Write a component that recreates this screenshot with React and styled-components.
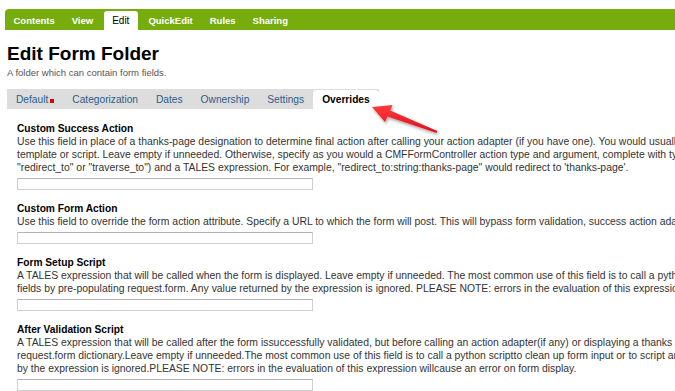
import React from 'react'
import styled, { createGlobalStyle } from 'styled-components'

const GlobalStyle = createGlobalStyle`
  html, body {
    margin: 0;
    padding: 0;
    background: #fff;
    overflow: hidden;
  }
  body {
    font-family: "Liberation Sans", Arial, sans-serif;
  }
`

const actions = ['Contents', 'View', 'Edit', 'QuickEdit', 'Rules', 'Sharing']
const tabs = ['Default', 'Categorization', 'Dates', 'Ownership', 'Settings', 'Overrides']

// help text is laid out as fixed lines, the right side is clipped by the window
const fields = [
  {
    label: 'Custom Success Action',
    lines: [
      'Use this field in place of a thanks-page designation to determine final action after calling your action adapter (if you have one). You would usually use this for a custom success',
      'template or script. Leave empty if unneeded. Otherwise, specify as you would a CMFFormController action type and argument, complete with type of action to execute (e.g.,',
      '"redirect_to" or "traverse_to") and a TALES expression. For example, "redirect_to:string:thanks-page" would redirect to \'thanks-page\'.',
    ],
  },
  {
    label: 'Custom Form Action',
    lines: [
      'Use this field to override the form action attribute. Specify a URL to which the form will post. This will bypass form validation, success action adapter and thanks page.',
    ],
  },
  {
    label: 'Form Setup Script',
    lines: [
      'A TALES expression that will be called when the form is displayed. Leave empty if unneeded. The most common use of this field is to call a python script that sets defaults for multiple',
      'fields by pre-populating request.form. Any value returned by the expression is ignored. PLEASE NOTE: errors in the evaluation of this expression will cause an error on form display.',
    ],
  },
  {
    label: 'After Validation Script',
    lines: [
      'A TALES expression that will be called after the form issuccessfully validated, but before calling an action adapter(if any) or displaying a thanks page. Form input will be in the',
      'request.form dictionary.Leave empty if unneeded.The most common use of this field is to call a python scriptto clean up form input or to script an alternative action. Any value returned',
      'by the expression is ignored.PLEASE NOTE: errors in the evaluation of this expression willcause an error on form display.',
    ],
  },
]

export default function App() {
  return (
    <>
      <GlobalStyle />
      <Page>
        <ActionBar>
          {actions.map((a) => (
            <ActionTab key={a} $active={a === 'Edit'}>{a}</ActionTab>
          ))}
        </ActionBar>

        <Title>Edit Form Folder</Title>
        <Description>A folder which can contain form fields.</Description>

        <SubTabs>
          {tabs.map((t) => (
            <SubTab key={t} $active={t === 'Overrides'}>
              {t}
              {t === 'Default' && <Required />}
            </SubTab>
          ))}
        </SubTabs>

        <Content>
          {fields.map((f) => (
            <Field key={f.label}>
              <Label>{f.label}</Label>
              {f.lines.map((l, i) => (
                <Help key={i}>{l}</Help>
              ))}
              <TextInput type="text" />
            </Field>
          ))}
        </Content>

        <Arrow viewBox="0 0 675 391">
          <defs>
            <linearGradient id="red" x1="0" y1="0" x2="0" y2="1">
              <stop offset="0" stopColor="#ff3b3b" />
              <stop offset="1" stopColor="#e0101a" />
            </linearGradient>
            <filter id="shadow" x="-20%" y="-20%" width="140%" height="160%">
              <feDropShadow dx="1" dy="2" stdDeviation="1.5" floodColor="#000" floodOpacity="0.35" />
            </filter>
          </defs>
          <polygon
            points="372,107 392.5,105 390.2,110.6 437.4,131.1 436.6,132.9 387.5,116.5 385,122"
            fill="url(#red)"
            filter="url(#shadow)"
          />
        </Arrow>
      </Page>
    </>
  )
}

const Page = styled.div`
  position: relative;
  width: 675px;
  height: 391px;
  overflow: hidden;
  padding-top: 9px;
  box-sizing: border-box;
`

const ActionBar = styled.div`
  display: flex;
  align-items: flex-end;
  height: 21px;
  margin-left: 5px;
  background: #76ac0c;
  border-top-left-radius: 4px;
`

const ActionTab = styled.div`
  display: flex;
  align-items: center;
  height: 19px;
  padding: 0 8.5px;
  margin: ${(p) => (p.$active ? '0 2px' : '0')};
  font-size: ${(p) => (p.$active ? '10px' : '9.5px')};
  font-weight: ${(p) => (p.$active ? 400 : 700)};
  color: ${(p) => (p.$active ? '#000' : '#fff')};
  background: ${(p) => (p.$active ? '#fff' : 'transparent')};
  border-radius: 3px 3px 0 0;
`

const Title = styled.h1`
  margin: 12px 0 0 7px;
  font-size: 19px;
  line-height: 24px;
  font-weight: 700;
  color: #000;
`

const Description = styled.p`
  margin: 1px 0 0 7px;
  font-size: 9.5px;
  line-height: 12px;
  color: #555;
`

const SubTabs = styled.div`
  display: flex;
  width: fit-content;
  align-items: flex-end;
  height: 20px;
  margin: 10px 0 0 7px;
  background: #dddddd;
`

const SubTab = styled.div`
  display: flex;
  align-items: center;
  height: 19px;
  padding: 0 9px;
  font-size: 10.2px;
  font-weight: ${(p) => (p.$active ? 700 : 400)};
  color: ${(p) => (p.$active ? '#000' : '#2b5d8c')};
  background: ${(p) => (p.$active ? '#fff' : 'transparent')};
  border-radius: 4px 4px 0 0;
`

const Required = styled.span`
  display: inline-block;
  width: 4px;
  height: 4px;
  margin: 3px 0 0 2px;
  background: #e0000b;
`

const Content = styled.div`
  padding: 13px 0 0 17px;
`

const Field = styled.div`
  margin-bottom: 12px;
`

const Label = styled.div`
  font-size: 10.2px;
  line-height: 13px;
  font-weight: 700;
  color: #000;
`

const Help = styled.div`
  font-size: 10.4px;
  line-height: 13px;
  color: #333;
  white-space: nowrap;
`

const TextInput = styled.input`
  display: block;
  box-sizing: border-box;
  width: 296px;
  height: 12px;
  margin: 4px 0 0;
  padding: 0;
  border: 1px solid #cfcfcf;
  border-top-color: #b5b5b5;
  background: #fff;
`

const Arrow = styled.svg`
  position: absolute;
  left: 0;
  top: 0;
  width: 675px;
  height: 391px;
  pointer-events: none;
`
